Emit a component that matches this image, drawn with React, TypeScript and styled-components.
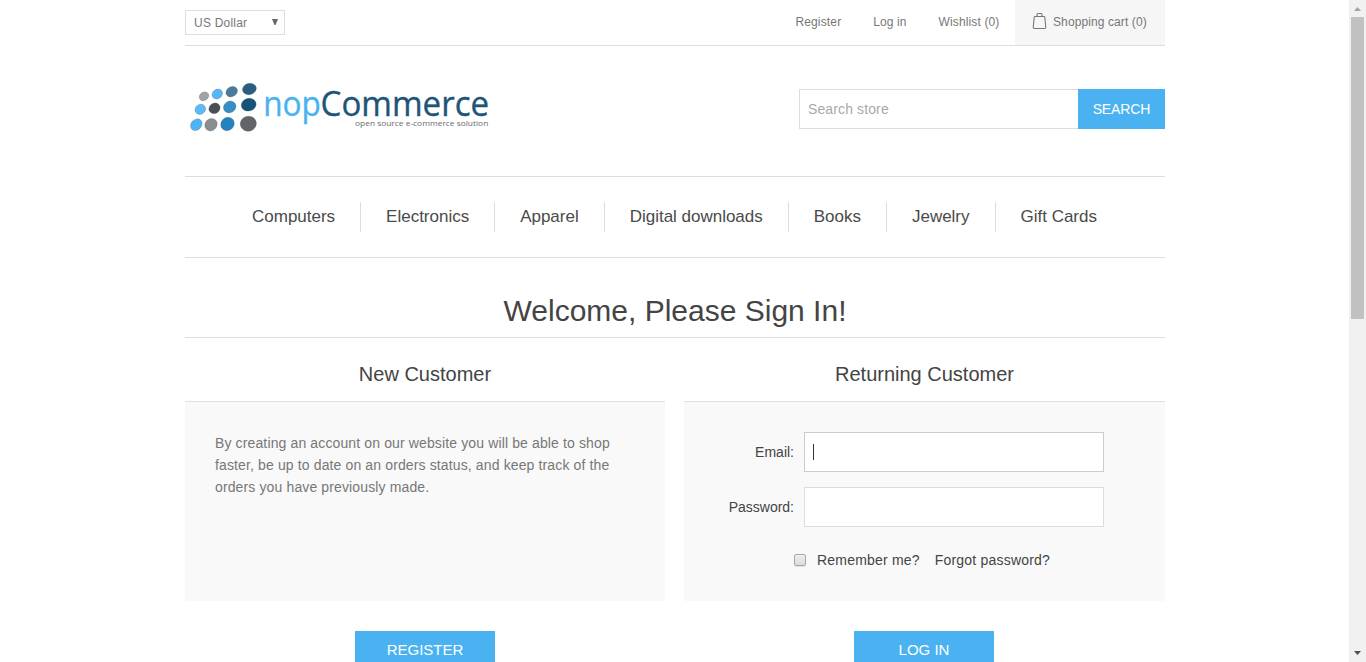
import React from 'react';
import styled, { createGlobalStyle } from 'styled-components';

const Global = createGlobalStyle`
  * { box-sizing: border-box; }
  body { margin: 0; background: #fff; color: #777; font: 14px "Liberation Sans", Arial, sans-serif; }
  input, button { font-family: inherit; }
`;
const Screen = styled.div`display: flex; height: 662px; overflow: hidden;`;
const Viewport = styled.div`flex: 1; padding-left: 185px;`;
const Page = styled.div`width: 980px;`;

const TopBar = styled.div`
  display: flex; justify-content: space-between; height: 46px; border-bottom: 1px solid #ddd; font-size: 12px;
`;
const Currency = styled.div`
  display: flex; align-items: center; justify-content: space-between; width: 100px; height: 25px;
  margin-top: 10px; padding: 0 6px 0 8px; border: 1px solid #ddd; letter-spacing: 0.22px;
`;
const Links = styled.div`display: flex; line-height: 44px;`;
const TopLink = styled.a<{ $gap: number; $spacing: number }>`
  margin-right: ${p => p.$gap}px; letter-spacing: ${p => p.$spacing}px; white-space: nowrap;
`;
const Cart = styled.a`
  display: flex; width: 150px; height: 45px; padding-left: 17px; background: #f6f6f6; letter-spacing: 0.1px;
  white-space: nowrap;
  svg { margin: 12px 6px 0 0; }
`;

const Brand = styled.div`
  display: flex; justify-content: space-between; height: 131px; border-bottom: 1px solid #ddd;
`;
const LogoArt = styled.svg`margin-top: 29px; display: block;`;
const Search = styled.form`display: flex; margin-top: 43px; height: 40px;`;
const SearchInput = styled.input`
  width: 279px; border: 1px solid #ddd; border-right: 0; padding: 0 8px; font-size: 14px; outline: none; border-radius: 0;
  letter-spacing: 0.12px;
  &::placeholder { color: #a9a9a9; opacity: 1; }
`;
const SearchButton = styled.button`
  width: 87px; border: 0; padding: 0; background: #4ab2f1; color: #fff; font-size: 14px; letter-spacing: -0.1px;
`;

const Menu = styled.nav`
  display: flex; justify-content: center; align-items: center; height: 81px; padding-right: 1px;
  border-bottom: 1px solid #ddd;
`;
const MenuItem = styled.a`
  height: 30px; padding: 0 25px; line-height: 29px; font-size: 17px; color: #4a4a4a; white-space: nowrap;
  letter-spacing: -0.01px;
  & + & { border-left: 1px solid #ddd; }
`;

const Title = styled.h1`
  margin: 0; height: 80px; padding-top: 35px; border-bottom: 1px solid #ddd; text-align: center;
  font-size: 30px; line-height: 36px; font-weight: 400; color: #444;
`;
const Columns = styled.div`display: flex; justify-content: space-between;`;
const Column = styled.section<{ $width: number }>`
  display: flex; flex-direction: column; width: ${p => p.$width}px;
`;
const Subtitle = styled.h2`
  margin: 0; height: 63px; line-height: 72px; text-align: center; font-size: 20px; font-weight: 400; color: #444;
`;
const Panel = styled.div`
  width: 100%; height: 200px; padding: 30px; background: #f9f9f9; border-top: 1px solid #e0e0e0; line-height: 22px;
`;
const Intro = styled.p`margin: 0; letter-spacing: 0.13px;`;
const Field = styled.label`
  display: flex; align-items: center; justify-content: flex-end; gap: 10px; height: 40px; margin: 0 31px 15px 0; color: #444;
`;
const FieldBox = styled.span<{ $focused?: boolean }>`
  display: flex; align-items: center; width: 300px; height: 40px; padding-left: 8px; background: #fff;
  border: 1px solid ${p => (p.$focused ? '#ccc' : '#ddd')};
`;
const Caret = styled.span`width: 1px; height: 16px; background: #333;`;
const Options = styled.div`
  display: flex; align-items: center; margin: 22px 0 0 80px; color: #444; white-space: nowrap; letter-spacing: 0.2px;
`;
const Check = styled.span`
  width: 12px; height: 12px; margin-right: 11px; border: 1px solid #a8a8a8; border-radius: 2px;
  background: linear-gradient(#eee, #dcdcdc); box-shadow: 0 1px 1px rgba(0, 0, 0, 0.1);
`;
const Forgot = styled.a`margin-left: 15px;`;
const Action = styled.button`
  width: 140px; height: 37px; margin: 30px 0 0 170px; padding: 0; border: 0; background: #4ab2f1; color: #fff;
  font-size: 15px;
`;

const Scrollbar = styled.div`
  display: flex; flex-direction: column; align-items: center; width: 17px; height: 662px; background: #f1f1f1;
`;
const Thumb = styled.div`width: 13px; height: 302px; background: #c1c1c1;`;
const Spacer = styled.div`flex: 1;`;

const dots = [
  [19, 21.3, 5, 4.1, '#a0a3a6'], [32.3, 19, 5.5, 4.6, '#54b8f7'], [46.7, 16.7, 6.1, 4.9, '#4b7a98'], [64.4, 14, 7, 5.6, '#2b5d80'],
  [15.3, 34.3, 5.5, 4.9, '#5cbcf8'], [29.5, 33.3, 5.8, 5.1, '#4b4e52'], [44.7, 32, 6.5, 5.7, '#388dc5'], [63.7, 29.7, 7.5, 6.3, '#175378'],
  [11.3, 49.7, 6.4, 5.2, '#4fb4f5'], [26, 49.7, 6.6, 5.8, '#8b8d8f'], [42.5, 49, 7.1, 6.5, '#2483bf'], [63.3, 48.7, 8.1, 7.5, '#626467'],
] as const;

const Logo = () => (
  <LogoArt width="310" height="65">
    {dots.map(([x, y, rx, ry, fill]) => (
      <ellipse key={`${x}-${y}`} cx={x} cy={y} rx={rx} ry={ry} fill={fill} stroke="#35526a" strokeOpacity="0.35" strokeWidth="0.7"
        transform={`rotate(${x > 60 ? -15 : y > 45 ? -45 : -32} ${x} ${y})`} />
    ))}
    <g fontFamily="Open Sans, Noto Sans, sans-serif">
      <text x="78.2" y="41.4" fontSize="34" fill="#4ab2f1" stroke="#4ab2f1" strokeWidth="0.35" textLength="57.600" lengthAdjust="spacingAndGlyphs">nop</text>
      <text x="135.600" y="41.4" fontSize="34" fill="#1e5478" stroke="#1e5478" strokeWidth="0.35" textLength="168.500" lengthAdjust="spacingAndGlyphs">Commerce</text>
      <text x="170" y="51.4" fontSize="8" fill="#686b70" textLength="133.300" lengthAdjust="spacingAndGlyphs">open source e-commerce solution</text>
    </g>
  </LogoArt>
);

const menu = ['Computers', 'Electronics', 'Apparel', 'Digital downloads', 'Books', 'Jewelry', 'Gift Cards'];

export default function App() {
  return (
    <Screen>
      <Global />
      <Viewport>
        <Page>
          <TopBar>
            <Currency>
              US Dollar
              <svg width="6" height="7"><path d="M0 0h6L3.5 6h-1z" fill="#666" /></svg>
            </Currency>
            <Links>
              <TopLink $gap={32} $spacing={0.15}>Register</TopLink>
              <TopLink $gap={32} $spacing={0.1}>Log in</TopLink>
              <TopLink $gap={15.5} $spacing={0.13}>Wishlist (0)</TopLink>
              <Cart>
                <svg width="15" height="18" fill="none" stroke="#777" strokeWidth="1.1">
                  <path d="M3 4.5h9q.7 0 .8.8l1 10q0 1.2-1 1.2H2.200q-1 0-1-1.200l1-10q.1-.8.800-.8zM5 4.500V2.500Q5 1.500 6 1.500h3q1 0 1 1v2" />
                </svg>
                Shopping cart (0)
              </Cart>
            </Links>
          </TopBar>
          <Brand>
            <Logo />
            <Search>
              <SearchInput placeholder="Search store" />
              <SearchButton type="button">SEARCH</SearchButton>
            </Search>
          </Brand>
          <Menu>{menu.map(m => <MenuItem key={m}>{m}</MenuItem>)}</Menu>
          <Title>Welcome, Please Sign In!</Title>
          <Columns>
            <Column $width={480}>
              <Subtitle>New Customer</Subtitle>
              <Panel>
                <Intro>
                  By creating an account on our website you will be able to shop faster, be up to date on an orders
                  status, and keep track of the orders you have previously made.
                </Intro>
              </Panel>
              <Action>REGISTER</Action>
            </Column>
            <Column $width={481}>
              <Subtitle>Returning Customer</Subtitle>
              <Panel>
                <Field>Email:<FieldBox $focused><Caret /></FieldBox></Field>
                <Field>Password:<FieldBox /></Field>
                <Options><Check />Remember me?<Forgot>Forgot password?</Forgot></Options>
              </Panel>
              <Action>LOG IN</Action>
            </Column>
          </Columns>
        </Page>
      </Viewport>
      <Scrollbar>
        <svg width="17" height="17"><path d="M5 11h7L8.500 7z" fill="#a3a3a3" /></svg>
        <Thumb />
        <Spacer />
        <svg width="17" height="17"><path d="M5 6h7L8.500 10z" fill="#505050" /></svg>
      </Scrollbar>
    </Screen>
  );
}
